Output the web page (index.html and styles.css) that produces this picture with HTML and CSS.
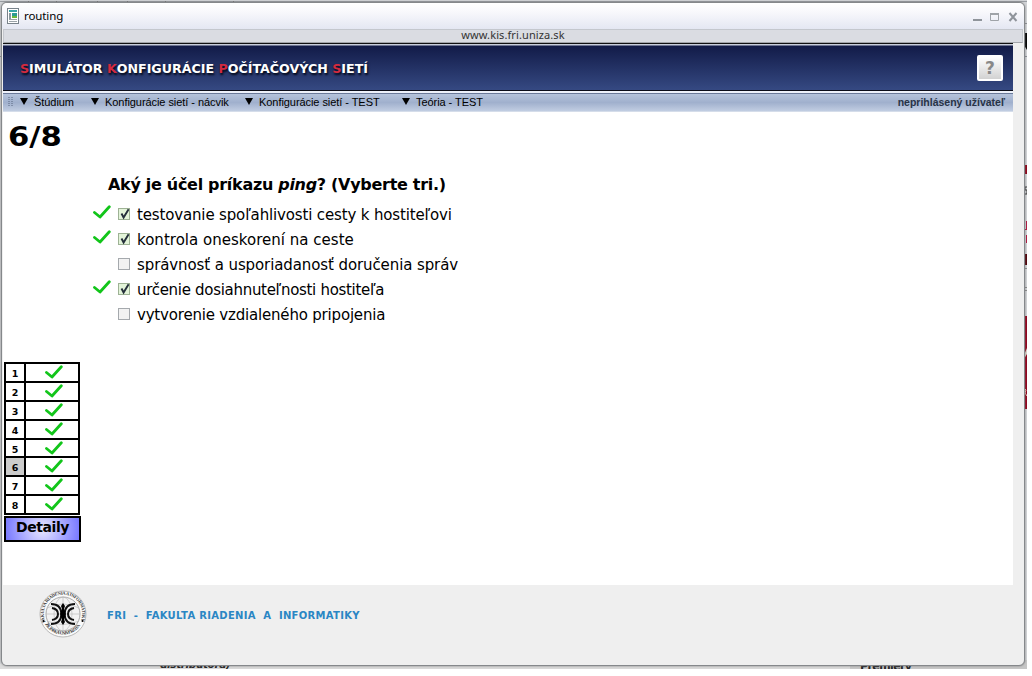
FILE: index.html
```html
<!DOCTYPE html>
<html lang="sk">
<head>
<meta charset="utf-8">
<title>routing</title>
<link rel="stylesheet" href="styles.css">
</head>
<body>
<svg width="0" height="0" class="defs">
  <symbol id="tick" viewBox="0 0 18 14"><path d="M1.500 7.500 L7 12 L16.300 1.700" fill="none" stroke="#12c51a" stroke-width="2.800" stroke-linecap="round" stroke-linejoin="round"/></symbol>
  <symbol id="box" viewBox="0 0 13 13"><path d="M3.500 5.500 L5.600 9.500 L10.600 1.200" fill="none" stroke="#26303c" stroke-width="1.900"/></symbol>
</svg>
<div class="desktop">
  <svg class="behind" width="1027" height="669">
    <path d="M0 1.500H1027" stroke="#999da2"/>
    <path d="M28.500 1v2M56.500 1v2M97.500 1v2M127.500 1v2M165.500 1v2M233.500 1v2" stroke="#777"/>
    <path d="M0 56.500H2M1023 56.500H1027M1023 23.500H1027" stroke="#8c8f94"/>
    <path d="M1027 33H1024.500V46L1027 50Z" fill="#000"/>
    <path d="M1024 165h3v9h-3z" fill="#8d0016"/>
    <path d="M1024 254h3v11h-3z" fill="#4e0008"/>
    <path d="M1024 316h3v93h-3z" fill="#91001b"/>
    <path d="M1024 355l3-7v6l-3 5z" fill="#ddd7cc"/>
    <path d="M1024 388l2 2-1 3 2 3" stroke="#ecc6b8" fill="none"/>
    <path d="M1024 268.500h3M1024 287.500h3M1024 290.500h3" stroke="#8b8b8b"/>
    <path d="M1026.500 221v8M1024 229.500h3M1026.500 235v8" stroke="#b01840"/>
    <path d="M1027 187h-2v3h2v4h-3" stroke="#333" fill="none"/>
    <path d="M0 664H150V669H0z" fill="#dcdcdc"/>
    <path d="M150 664H850V669H150z" fill="#d8d8d8"/>
    <path d="M850 660H1027V669H850z" fill="#c6c6c6"/>
  </svg>
  <div class="peek peek-left">distribútora)</div>
  <div class="peek peek-right">Premiéry</div>

  <div class="window">
    <div class="titlebar">
      <svg class="app-icon" width="12" height="16" viewBox="0 0 12 16">
        <rect x=".5" y=".5" width="11" height="15" fill="#fff" stroke="#78828a"/>
        <path d="M2 2h8v2H2z" fill="#35a5a8"/><path d="M2 5h2v6H2z" fill="#8b979d"/>
        <path d="M5 5h5v3H5z" fill="#2b9b92"/><path d="M5 8h5v2H5z" fill="#68b83c"/>
        <path d="M2 11.500h8M2 13.500h8" stroke="#9ba3a8"/>
      </svg>
      <span class="title">routing</span>
      <svg class="controls" width="46" height="12" viewBox="0 0 46 12">
        <path d="M0 9h9" stroke="#8f949b" stroke-width="2"/>
        <path d="M17.500 2.500h8v7h-8z" fill="none" stroke="#9fa3a8"/><path d="M17 3h9" stroke="#9fa3a8" stroke-width="2"/>
        <path d="M36.500 2l7 8M43.500 2l-7 8" stroke="#8f949b" stroke-width="2"/>
      </svg>
    </div>
    <div class="urlbar"><span>www.kis.fri.uniza.sk</span></div>
    <div class="page">
      <div class="header">
        <h1 class="logo"><b>S</b>IMULÁTOR <b>K</b>ONFIGURÁCIE <b>P</b>OČÍTAČOVÝCH <b>S</b>IETÍ</h1>
        <div class="help">?</div>
      </div>
      <div class="menu">
        <svg class="grip" width="5" height="10"><path d="M1 0v10M4 0v10" stroke="#56657e" stroke-dasharray="1 1"/></svg>
        <div class="item m1"><i class="arrow"></i><span>Štúdium</span></div>
        <div class="item m2"><i class="arrow"></i><span>Konfigurácie sietí - nácvik</span></div>
        <div class="item m3"><i class="arrow"></i><span>Konfigurácie sietí - TEST</span></div>
        <div class="item m4"><i class="arrow"></i><span>Teória - TEST</span></div>
        <div class="user">neprihlásený užívateľ</div>
      </div>
      <div class="content">
        <div class="counter"><span>6/8</span></div>
        <div class="question"><span>Aký je účel príkazu <em>ping</em>? (Vyberte tri.)</span></div>
        <div class="answers">
          <div class="answer"><svg class="ok"><use href="#tick"/></svg><span class="check on"><svg><use href="#box"/></svg></span><span class="a1">testovanie spoľahlivosti cesty k hostiteľovi</span></div>
          <div class="answer"><svg class="ok"><use href="#tick"/></svg><span class="check on"><svg><use href="#box"/></svg></span><span class="a2">kontrola oneskorení na ceste</span></div>
          <div class="answer"><svg class="ok"></svg><span class="check"></span><span class="a3">správnosť a usporiadanosť doručenia správ</span></div>
          <div class="answer"><svg class="ok"><use href="#tick"/></svg><span class="check on"><svg><use href="#box"/></svg></span><span class="a4">určenie dosiahnuteľnosti hostiteľa</span></div>
          <div class="answer"><svg class="ok"></svg><span class="check"></span><span class="a5">vytvorenie vzdialeného pripojenia</span></div>
        </div>
        <div class="results">
          <div class="num">1</div><div class="res"><svg><use href="#tick"/></svg></div>
          <div class="num">2</div><div class="res"><svg><use href="#tick"/></svg></div>
          <div class="num">3</div><div class="res"><svg><use href="#tick"/></svg></div>
          <div class="num">4</div><div class="res"><svg><use href="#tick"/></svg></div>
          <div class="num">5</div><div class="res"><svg><use href="#tick"/></svg></div>
          <div class="num current">6</div><div class="res"><svg><use href="#tick"/></svg></div>
          <div class="num">7</div><div class="res"><svg><use href="#tick"/></svg></div>
          <div class="num">8</div><div class="res"><svg><use href="#tick"/></svg></div>
        </div>
        <div class="details">Detaily</div>
      </div>
      <div class="footer">
        <svg class="seal" width="48" height="48" viewBox="0 0 48 48">
          <defs><path id="top" d="M6.500 32A19.300 19.300 0 1 1 41.500 32"/><path id="bottom" d="M6 34A20.600 20.600 0 0 0 42 34"/></defs>
          <circle cx="24" cy="24" r="23" fill="#fafafa" stroke="#aaa" stroke-width=".8"/>
          <circle cx="24" cy="24" r="17" fill="#f3f3f3" stroke="#888" stroke-width=".7"/>
          <g fill="none" stroke="#b5b5b5" stroke-width=".6"><ellipse cx="24" cy="24" rx="9" ry="17"/><path d="M8 18Q24 10 40 18M8 31Q24 38 40 31M7 24h34M24 7v34"/></g>
          <text class="seal-text"><textPath href="#top" textLength="76">FAKULTA RIADENIA A INFORMATIKY</textPath></text>
          <text class="seal-text"><textPath href="#bottom" textLength="42">ŽILINSKÁ UNIVERZITA</textPath></text>
          <circle cx="4.500" cy="31" r="1" /><circle cx="43.500" cy="31" r="1"/>
          <g fill="none" stroke="#111" stroke-width="2"><path d="M12 14Q22 14 22.500 24Q22 34 12 34"/><path d="M36 14Q26 14 25.500 24Q26 34 36 34"/><path d="M13 18Q19 19 19 24Q19 29 13 30M35 18Q29 19 29 24Q29 29 35 30"/></g>
          <path d="M24 13l2 3-1 3 2 5-2 5 1 3-2 3-2-3 1-3-2-5 2-5-1-3z"/>
        </svg>
        <div class="faculty">FRI&nbsp; -&nbsp; FAKULTA RIADENIA&nbsp; A&nbsp; INFORMATIKY</div>
      </div>
    </div>
  </div>
</div>
</body>
</html>
```
FILE: styles.css
```css
* { box-sizing: border-box; }
body { margin: 0; background: #fff; font-family: "DejaVu Sans", sans-serif; color: #000; }
.defs { position: absolute; }
.desktop { position: relative; width: 1027px; height: 669px; overflow: hidden; background: #d2d4d7; }
.behind { position: absolute; left: 0; top: 0; }
.peek { position: absolute; font: bold 11px/14px "DejaVu Sans", sans-serif; color: #222; white-space: nowrap; }
.peek-left { left: 160px; top: 657px; font-style: italic; font-size: 10.500px; letter-spacing: -.4px; }
.peek-right { left: 860px; top: 660px; letter-spacing: -.6px; }

.window { position: absolute; left: 1px; top: 2px; width: 1024px; height: 664px; border: 1px solid #85888b; border-radius: 6px; overflow: hidden; background: #efefef; box-shadow: 0 0 2px #777; display: flex; flex-direction: column; }
.titlebar { height: 26px; flex: none; display: flex; align-items: center; padding: 0 5px 0 5px; background: linear-gradient(#fff, #f8f8fc 35%, #e4e7f2); }
.app-icon { margin-right: 5px; margin-top: -1px; }
.title { flex: 1; font: 11.500px/16px "Noto Sans", sans-serif; letter-spacing: -.1px; }
.controls { flex: none; margin-top: 1px; }
.urlbar { height: 14px; flex: none; margin: 0 1px; border: 1px solid #c4c7cd; border-bottom-color: #a2a5aa; background: #dadce2; text-align: center; font: 11px/10px "Noto Sans", sans-serif; color: #333; letter-spacing: .1px; }
.page { width: 1011px; padding-left: 1px; flex: 1; display: flex; flex-direction: column; }
.header { height: 50px; flex: none; display: flex; align-items: center; justify-content: space-between; padding: 0 10px 0 17px; border-top: 1px solid #111; border-bottom: 2px solid #edf1fa; background: linear-gradient(#c9cedc 0 1px, #121b48 2px, #354982 46px, #0b0d18 46px); }
.logo { margin: 2px 0 0; font: bold 11.500px/16px "DejaVu Sans", sans-serif; color: #fff; text-shadow: 1px 2px 2px #030818; white-space: nowrap; transform: scaleX(1.098); transform-origin: left; }
.logo b { color: #d22a3f; }
.help { width: 26px; height: 26px; margin-top: 1px; border: 2px solid #fff; border-radius: 2px; background: linear-gradient(#fff, #d2d2d2); text-align: center; font: bold 17px/23px "DejaVu Sans", sans-serif; color: #888; }
.menu { height: 19px; flex: none; display: flex; align-items: center; padding: 0 8px 2px 5px; border-top: 1px solid #6b7a99; border-bottom: 1px solid #d5ddea; background: linear-gradient(#b5c3db, #a0b0cd 50%, #c1cde2); font: 11px/14px "Liberation Sans", sans-serif; letter-spacing: -.06px; }
.grip { margin-right: 7px; }
.item { display: flex; align-items: center; white-space: nowrap; flex: none; }
.arrow { width: 0; height: 0; border: 4px solid transparent; border-top: 7px solid #000; border-bottom: 0; margin-right: 6px; }
.m1 { width: 71px; } .m2 { width: 154px; } .m3 { width: 157px; } .m4 { width: 90px; }
.user { margin-left: auto; font-weight: bold; color: #283347; font-size: 10.500px; letter-spacing: 0; }

.content { height: 473px; flex: none; background: #fff; display: flex; flex-direction: column; align-items: flex-start; }
.counter { padding: 9px 0 0 5px; height: 61px; font: bold 26px/32px "DejaVu Sans", sans-serif; }
.counter span { display: inline-block; transform: scaleX(1.18); transform-origin: left; }
.question { padding-left: 105px; height: 29px; font-weight: bold; font-size: 16px; line-height: 23px; letter-spacing: -.3px; white-space: nowrap; }
.answers { padding-left: 90px; height: 159px; }
.answer { height: 25px; display: flex; align-items: center; font-size: 15px; white-space: nowrap; }
.a1 { letter-spacing: -.15px; } .a2 { letter-spacing: .02px; } .a3 { letter-spacing: -.1px; } .a4 { letter-spacing: -.3px; } .a5 { letter-spacing: -.19px; }
.ok { width: 18px; height: 14px; margin: -5px 7px 0 0; }
.check { width: 12px; height: 12px; margin: -1px 7px 0 0; border: 1px solid #a5a9ad; background: #f2f2f2; }
.check svg { width: 13px; height: 13px; display: block; margin: -1px; }
.check.on { background: #e3f4d9; border-color: #9eb295; }
.results { width: 76px; margin: 1px 0 0 1px; padding: 2px; background: #000; display: grid; grid-template-columns: 18px 52px; grid-template-rows: 17px 17px 17px 17px 16px 17px 17px 17px; gap: 2px; }
.num { background: #fff; font: bold 9.500px/19px "DejaVu Sans", sans-serif; text-align: center; height: 100%; overflow: hidden; }
.num.current { background: #ccc; }
.res { background: #fff; display: flex; justify-content: center; align-items: flex-start; padding-left: 4px; overflow: hidden; }
.res svg { width: 18px; height: 14px; margin-top: 1px; }
.details { width: 77px; height: 26px; border: 2px solid #000; margin: 1px 0 0 1px; background: radial-gradient(circle, #e8e8ff, #7777ff); font: bold 14px/19px "DejaVu Sans", sans-serif; letter-spacing: -.4px; text-align: center; }
.footer { flex: 1; display: flex; align-items: flex-start; padding: 5px 0 0 36px; background: #efefef; }
.seal { flex: none; margin-right: 20px; }
.seal-text { font: bold 4.500px "Liberation Serif", serif; fill: #333; }
.faculty { margin-top: 19px; font: bold 10px/14px "DejaVu Sans", sans-serif; color: #2a86c4; white-space: nowrap; letter-spacing: .3px; }
```
